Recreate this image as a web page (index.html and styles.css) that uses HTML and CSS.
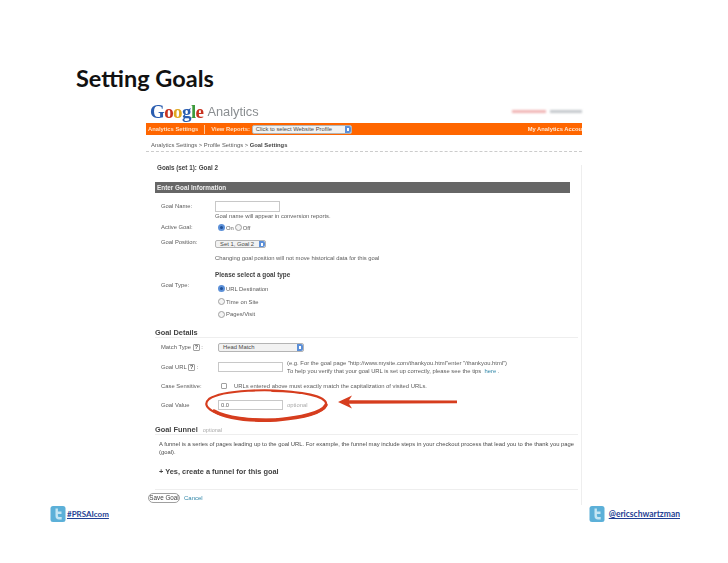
FILE: index.html
```html
<!DOCTYPE html>
<html lang="en">
<head>
    <meta charset="UTF-8">
    <title>Setting Goals</title>
    <link rel="stylesheet" href="styles.css">
</head>
<body>
    <div class="slide">
        <h1 class="title">Setting Goals</h1>

        <div class="shot">
            <div class="ga-head">
                <div class="logo"><span class="c-blue">G</span><span class="c-red">o</span><span class="c-yellow">o</span><span class="c-blue">g</span><span class="c-green">l</span><span class="c-red">e</span></div>
                <div class="logo-sub">Analytics</div>
                <div class="user-blur"><span class="blur-red"></span><span class="blur-gray"></span></div>
            </div>

            <div class="ga-nav">
                <span class="nav-link">Analytics Settings</span>
                <span class="nav-sep"></span>
                <span class="nav-link">View Reports:</span>
                <span class="select select-profile">Click to select Website Profile</span>
                <span class="nav-right">My Analytics Accou</span>
            </div>

            <div class="crumbs">Analytics Settings &gt; Profile Settings &gt; <b>Goal Settings</b></div>

            <div class="sheet">
                <div class="goals-title">Goals (set 1): Goal 2</div>
                <div class="bar">Enter Goal Information</div>

                <div class="info">
                    <div class="row r-name">
                        <div class="label up1">Goal Name:</div>
                        <span class="input input-name"></span>
                    </div>
                    <div class="row r-hint">
                        <div class="label"></div>
                        <div>Goal name will appear in conversion reports.</div>
                    </div>
                    <div class="row r-active">
                        <div class="label up1">Active Goal:</div>
                        <div class="choice"><span class="radio on"></span>On <span class="radio"></span>Off</div>
                    </div>
                    <div class="row r-pos">
                        <div class="label up1">Goal Position:</div>
                        <span class="select select-pos">Set 1, Goal 2</span>
                    </div>
                    <div class="row r-note">
                        <div class="label"></div>
                        <div>Changing goal position will not move historical data for this goal</div>
                    </div>
                    <div class="row r-type-head">
                        <div class="label"></div>
                        <b class="type-head">Please select a goal type</b>
                    </div>
                    <div class="row r-type">
                        <div class="label up3">Goal Type:</div>
                        <div class="choice"><span class="radio on"></span>URL Destination</div>
                    </div>
                    <div class="row r-type">
                        <div class="label"></div>
                        <div class="choice"><span class="radio"></span>Time on Site</div>
                    </div>
                    <div class="row r-type-last">
                        <div class="label"></div>
                        <div class="choice"><span class="radio"></span>Pages/Visit</div>
                    </div>
                </div>

                <h2 class="section details-head">Goal Details</h2>
                <div class="details">
                    <div class="row r-match">
                        <div class="label">Match Type <span class="help">?</span> :</div>
                        <span class="select select-match">Head Match</span>
                    </div>
                    <div class="row r-url">
                        <div class="label">Goal URL <span class="help">?</span> :</div>
                        <span class="input input-url"></span>
                        <div class="url-note">(e.g. For the goal page "http://www.mysite.com/thankyou.html"enter "/thankyou.html")<br>To help you verify that your goal URL is set up correctly, please see the tips &nbsp;<a class="link">here</a> .</div>
                    </div>
                    <div class="row r-case">
                        <div class="label">Case Sensitive:</div>
                        <span class="check"></span>
                        <div>URLs entered above must exactly match the capitalization of visited URLs.</div>
                    </div>
                    <div class="row r-value">
                        <div class="label">Goal Value</div>
                        <span class="input input-url">0.0</span>
                        <div class="optional">optional</div>
                    </div>
                </div>

                <h2 class="section funnel-head">Goal Funnel <span class="optional">optional</span></h2>
                <p class="funnel-text">A funnel is a series of pages leading up to the goal URL. For example, the funnel may include steps in your checkout process that lead you to the thank you page (goal).</p>
                <div class="funnel-add">+ Yes, create a funnel for this goal</div>
                <div class="divider"></div>
                <div class="actions">
                    <span class="save-btn">Save Goal</span>
                    <a class="link">Cancel</a>
                </div>
            </div>
        </div>

        <div class="footer">
            <div class="tag tag-left">
                <svg class="bird" viewBox="0 0 16 16"><rect x="0.5" y="0.5" width="15" height="16" rx="2.5" fill="#5cb0d8"/><path d="M5.5 3h2.4v3h3.6v2.400H7.900v1.600c0 1 .6 1.500 1.600 1.500h2.200v2.500H9c-2.300 0-3.500-1.300-3.500-3.400z" fill="#c4e6f4"/></svg>
                <span class="tag-text">#PRSAIcom</span>
            </div>
            <div class="tag tag-right">
                <svg class="bird" viewBox="0 0 16 16"><rect x="0.5" y="0.5" width="15" height="16" rx="2.5" fill="#5cb0d8"/><path d="M5.5 3h2.400v3h3.600v2.400H7.900v1.600c0 1 .6 1.500 1.600 1.500h2.200v2.500H9c-2.300 0-3.500-1.300-3.500-3.400z" fill="#c4e6f4"/></svg>
                <span class="tag-text">@ericschwartzman</span>
            </div>
        </div>

        <!-- red marker drawn over the screenshot -->
        <svg class="markup" viewBox="0 0 728 563">
            <path d="M300 393C270 388 222 390 209 399C200 407 214 416 246 419C280 422 322 416 326 405C328 396 300 391 272 391" fill="none" stroke="#d63d1e" stroke-width="2.200" stroke-linecap="round"/>
            <path d="M214 411C226 418 250 421 276 420C300 418 322 413 326 405" fill="none" stroke="#d63d1e" stroke-width="3.400" stroke-linecap="round"/>
            <path d="M338 402L352 395.500L349 400.300L457 400.600L457 403.200L349 403.700L352 408.500Z" fill="#d63d1e"/>
        </svg>
    </div>
</body>
</html>
```

FILE: styles.css
```css
* {
    margin: 0;
    padding: 0;
    box-sizing: border-box;
}

body {
    background: #ffffff;
    font-family: "Liberation Sans", Arial, sans-serif;
}

.slide {
    position: relative;
    width: 728px;
    height: 563px;
    overflow: hidden;
    background: #ffffff;
}

.title {
    height: 100px;
    padding: 64px 0 0 76px;
    font-family: Lato, "Open Sans", sans-serif;
    font-size: 23.500px;
    font-weight: 700;
    line-height: 28px;
    color: #111111;
}

.shot {
    width: 436px;
    margin-left: 146px;
    font-size: 5.850px;
    color: #5c5c5c;
    filter: blur(0.35px);
}

/* header */
.ga-head {
    display: flex;
    height: 23px;
    padding-left: 4px;
    align-items: flex-end;
}

.logo {
    font-family: "Liberation Serif", serif;
    font-size: 19px;
    line-height: 22px;
    letter-spacing: -0.6px;
    font-weight: 700;
}

.c-blue { color: #2a5db0; }
.c-red { color: #c8321f; }
.c-yellow { color: #e0a820; }
.c-green { color: #3c9a3c; }

.logo-sub {
    margin-left: 4px;
    font-size: 12.800px;
    line-height: 22px;
    color: #8a8e91;
}

.user-blur {
    display: flex;
    gap: 4px;
    margin-left: auto;
    margin-bottom: 10px;
}

.blur-red,
.blur-gray {
    display: block;
    height: 3px;
    filter: blur(1.2px);
}

.blur-red {
    width: 34px;
    background: #f0b4b4;
}

.blur-gray {
    width: 32px;
    background: #c4c8cc;
}

.ga-nav {
    display: flex;
    align-items: center;
    height: 12px;
    padding-left: 2px;
    overflow: hidden;
    background: #ff6600;
    font-size: 5.800px;
    font-weight: 700;
    color: #ffe0c4;
    white-space: nowrap;
}

.nav-sep {
    width: 1px;
    height: 9px;
    margin: 0 6px;
    background: #ffc898;
}

.nav-right {
    margin-left: auto;
    color: #ffe8d4;
}

.select {
    position: relative;
    display: block;
    border: 1px solid #b4b4b4;
    border-radius: 2px;
    background: #f2f2f2;
    color: #4a4a4a;
    font-weight: 400;
    white-space: nowrap;
}

/* aqua style stepper at the end of a select */
.select::after {
    content: "";
    position: absolute;
    top: 0;
    right: 0;
    bottom: 0;
    width: 6px;
    border-radius: 0 2px 2px 0;
    background: #5b8fd8;
}

.select::before {
    content: "";
    position: absolute;
    z-index: 1;
    top: 2px;
    right: 2px;
    width: 2px;
    height: 3px;
    background: #ffffff;
}

.select-profile {
    width: 100px;
    height: 9px;
    margin-left: 2px;
    padding-left: 3px;
    line-height: 7px;
}

.crumbs {
    height: 17px;
    padding: 7px 0 0 5px;
    border-bottom: 1px dashed #cccccc;
    line-height: 7px;
    color: #5a5a5a;
}

.crumbs b {
    color: #444444;
}

/* form area */
.sheet {
    height: 340px;
    margin-top: 13px;
    padding: 0 3px 0 9px;
    border-right: 1px solid #eeeeee;
}

.goals-title {
    height: 17px;
    padding-left: 2px;
    font-size: 6.300px;
    font-weight: 700;
    line-height: 5px;
    color: #444444;
}

.bar {
    height: 11px;
    margin-right: 8px;
    padding-left: 2px;
    background: #666666;
    font-size: 6.400px;
    font-weight: 700;
    line-height: 12px;
    color: #eeeeee;
}

.info {
    padding-top: 8px;
}

.row {
    display: flex;
    align-items: center;
}

.label {
    flex: none;
    width: 60px;
    padding-left: 6px;
    white-space: nowrap;
}

.up1 { padding-bottom: 2px; }
.up3 { padding-bottom: 7px; }

.r-name { height: 11px; }
.r-hint { height: 8px; }
.r-active { height: 15px; }
.r-pos { height: 15px; }
.r-note { height: 16px; }
.r-type-head { height: 16px; }
.r-type { height: 13px; }
.r-type-last { height: 12px; }

.type-head {
    font-size: 6.400px;
    color: #444444;
}

.input {
    display: block;
    flex: none;
    border: 1px solid #c8c8c8;
    background: #ffffff;
}

.input-name {
    width: 65px;
    height: 11px;
}

.input-url {
    width: 65px;
    height: 10px;
    padding-left: 2px;
    line-height: 8px;
}

.choice {
    display: flex;
    align-items: center;
    margin-left: 2px;
}

.radio {
    width: 7px;
    height: 7px;
    margin: 0 1px;
    border: 1px solid #a0a0a0;
    border-radius: 50%;
    background: #f4f4f4;
}

.radio.on {
    border: 2px solid #5c90d8;
    background: #1f4f96;
}

.select-pos {
    width: 51px;
    height: 8px;
    margin-top: 3px;
    padding-left: 4px;
    line-height: 6px;
}

.section {
    height: 18px;
    padding-top: 8px;
    border-bottom: 1px solid #eeeeee;
    font-size: 7.400px;
    font-weight: 700;
    line-height: 9px;
    color: #444444;
}

.funnel-head {
    height: 20px;
    padding-top: 10px;
}

.funnel-head .optional {
    margin-left: 3px;
    font-size: 5.500px;
    font-weight: 400;
}

.details .label {
    width: 63px;
}

.r-match { height: 19px; }
.r-url { height: 20px; }
.r-case { height: 18px; }
.r-value { height: 20px; }

.help {
    display: inline-block;
    width: 7px;
    height: 7px;
    border: 1px solid #a0a0a0;
    border-radius: 1px;
    font-size: 6px;
    font-weight: 700;
    line-height: 5px;
    text-align: center;
}

.select-match {
    width: 86px;
    height: 9px;
    padding-left: 4px;
    line-height: 7px;
}

.url-note {
    margin-left: 4px;
    line-height: 8px;
    white-space: nowrap;
}

.link {
    color: #2f86a8;
}

.check {
    flex: none;
    width: 6px;
    height: 6px;
    margin: 0 7px 0 3px;
    border: 1px solid #a0a0a0;
    border-radius: 1px;
}

.optional {
    margin-left: 4px;
    color: #aaaaaa;
}

.funnel-text {
    margin: 5px 3px 0 4px;
    font-size: 5.830px;
    line-height: 8px;
    color: #4a4a4a;
}

.funnel-add {
    margin: 10px 0 0 4px;
    font-size: 7.400px;
    font-weight: 700;
    line-height: 11px;
    color: #444444;
}

.divider {
    height: 1px;
    margin-top: 12px;
    background: #eeeeee;
}

.actions {
    display: flex;
    align-items: center;
    gap: 4px;
    margin: 3px 0 0 -7px;
    font-size: 6px;
}

.save-btn {
    display: block;
    width: 32px;
    height: 10px;
    border: 1px solid #a0a0a0;
    border-radius: 5px;
    font-size: 6.300px;
    line-height: 8px;
    text-align: center;
    color: #444444;
}

/* twitter tags */
.footer {
    display: flex;
    justify-content: space-between;
    padding: 0 48px 0 50px;
}

.tag {
    display: flex;
    align-items: center;
    gap: 1px;
}

.tag-right {
    gap: 4px;
}

.bird {
    display: block;
    width: 16px;
    height: 17px;
    filter: blur(0.5px);
}

.tag-text {
    margin-top: 1px;
    font-family: Lato, "Open Sans", sans-serif;
    font-size: 8.500px;
    font-weight: 700;
    color: #1f3f94;
    text-decoration: underline;
}

.tag-left .tag-text {
    font-size: 8px;
}

.markup {
    position: absolute;
    top: 0;
    left: 0;
    width: 728px;
    height: 563px;
    pointer-events: none;
    filter: blur(0.3px);
}
```
